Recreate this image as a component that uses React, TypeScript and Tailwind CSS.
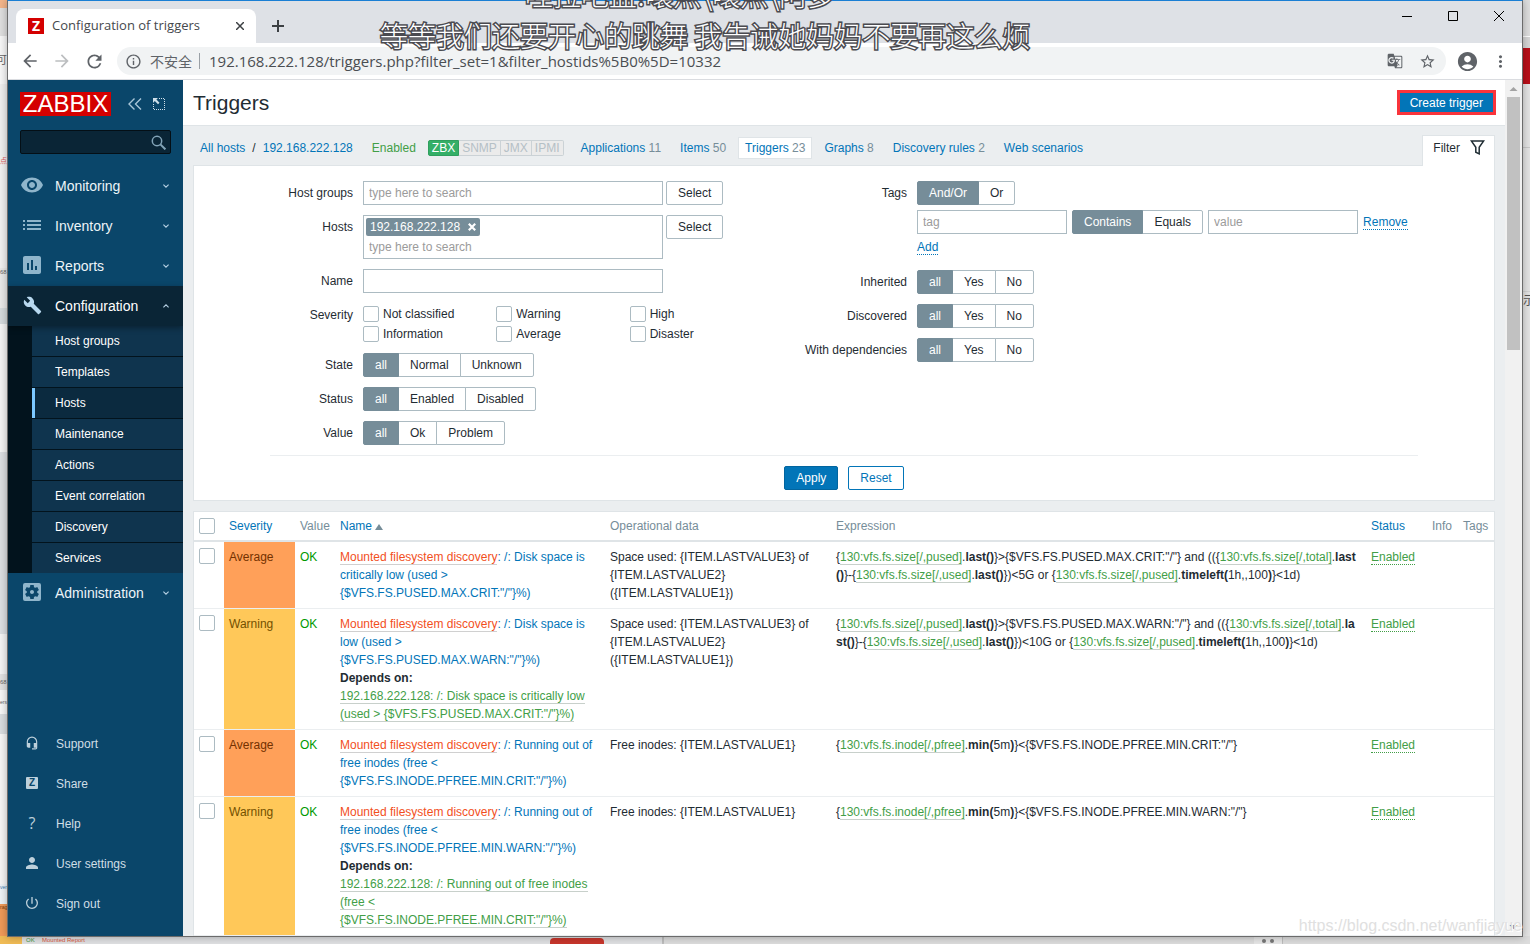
import React, { Fragment, useState } from "react";
import type { ReactNode } from "react";
import {
  MdAccountCircle,
  MdArrowBack,
  MdArrowForward,
  MdBuild,
  MdGTranslate,
  MdHeadsetMic,
  MdInfoOutline,
  MdInsertChart,
  MdList,
  MdMoreVert,
  MdPerson,
  MdPowerSettingsNew,
  MdRefresh,
  MdSettingsApplications,
  MdStarBorder,
  MdVisibility,
} from "react-icons/md";

/* ---------- Desktop behind the window ---------- */

function Backdrop() {
  return (
    <div aria-hidden="true" className="absolute inset-0 flex flex-col overflow-hidden bg-[#dfe0e2]">
      <div className="flex min-h-0 flex-1 justify-between">
        <div className="flex w-[7px] flex-col overflow-hidden whitespace-nowrap bg-[#f1f1f1] text-[6px] text-[#666]">
          <div className="h-2 bg-[#f3b58a]" />
          <div className="h-7 bg-[#dfdfdf]" />
          <div className="flex h-12 justify-end bg-[#f7f7f7] pt-4 font-['Noto_Sans_CJK_SC',sans-serif] text-[11px]">可</div>
          <div className="h-[72px] bg-[#efefef]" />
          <div className="h-28 text-[7px] text-[#e06060]">点</div>
          <div className="h-10 bg-[#e9e9e9]">68</div>
          <div className="h-4 bg-[#d5dadd]" />
          <div className="h-32 bg-[#f4f4f4]" />
          <div className="h-[182px] bg-[#dcdfe2]" />
          <div className="h-10 bg-[#f4f4f4]" />
          <div className="h-4 bg-[#e2e2e2] leading-4">68</div>
          <div className="h-6 bg-[#f7f7f7] text-[5px] leading-6">ers</div>
          <div className="h-5 bg-[#d9dde0]" />
          <div className="flex-1 bg-[#f6f6f6]" />
          <div className="h-5 bg-[#eef3f7] text-[5px] text-[#3b82b6]">ver</div>
          <div className="h-8 bg-[#f09a58] text-[5px] text-[#7a3d10]">rag</div>
        </div>
        <div className="flex w-[7px] flex-col overflow-hidden bg-[#e4e4e4]">
          <div className="h-9 bg-[#dedede]" />
          <div className="h-3 border-t border-white bg-[#d6d6d6]" />
          <div className="h-9 bg-[#b90f19]" />
          <div className="h-16 border-b border-[#c9c9c9]" />
          <div className="h-36 border-b border-[#d4d4d4]" />
          <div className="font-['Noto_Sans_CJK_SC',sans-serif] text-[12px] leading-4 text-[#555]">示</div>
        </div>
      </div>
      <div className="flex h-2 items-start overflow-hidden text-[6px] leading-2">
        <div className="h-2 w-[22px] bg-[#f0bb55]" />
        <span className="ml-1 w-3 text-[#3c963c]">OK</span>
        <span className="ml-1 w-[508px] text-[#d9573c]">Mounted Report</span>
        <div className="mt-0.5 h-2 w-[54px] rounded-t bg-[#c8362c]" />
        <div className="ml-[58px] h-2 w-0.5 bg-[#bdbdbd]" />
        <div className="flex h-2 flex-1 bg-[#dcdcdc]">
          <div className="ml-[590px] flex gap-1 border-r border-[#bdbdbd] bg-[#e6e6e6] px-2 pt-[3px]">
            <span className="size-1 rounded-full bg-[#777]" />
            <span className="size-1 rounded-full bg-[#777]" />
          </div>
        </div>
      </div>
    </div>
  );
}

/* ---------- Browser chrome ---------- */

function TabStrip() {
  return (
    <div className="flex h-[42px] shrink-0 items-end bg-[#dee1e6] pl-2">
      <div className="flex h-[34px] w-60 items-center rounded-t-lg bg-white pl-3 pr-2">
        <span className="flex size-4 items-center justify-center bg-[#d40000] font-['Open_Sans',sans-serif] text-sm font-bold leading-4 text-white">
          Z
        </span>
        <span className="ml-2 flex-1 whitespace-nowrap font-['Open_Sans',sans-serif] text-[13px] text-[#45494d]">
          Configuration of triggers
        </span>
        <button type="button" aria-label="Close tab" className="p-1">
          <svg viewBox="0 0 8 8" className="size-2" stroke="#3c4043" strokeWidth="1.5">
            <path d="M0 0l8 8M8 0l-8 8" />
          </svg>
        </button>
      </div>
      <button type="button" aria-label="New tab" className="ml-4 mb-[11px]">
        <svg viewBox="0 0 12 12" className="size-3" stroke="#3c4043" strokeWidth="2">
          <path d="M6 0v12M0 6h12" />
        </svg>
      </button>
      <div className="mb-[22px] ml-auto mr-[18px] flex items-center gap-9 text-black">
        <button type="button" aria-label="Minimize">
          <svg viewBox="0 0 10 10" className="size-2.5" stroke="currentColor">
            <path d="M0 5.5h10" />
          </svg>
        </button>
        <button type="button" aria-label="Maximize">
          <svg viewBox="0 0 10 10" className="size-2.5" stroke="currentColor" fill="none">
            <path d="M.5.5h9v9h-9z" />
          </svg>
        </button>
        <button type="button" aria-label="Close window">
          <svg viewBox="0 0 10 10" className="size-2.5" stroke="currentColor">
            <path d="M0 0l10 10M10 0L0 10" />
          </svg>
        </button>
      </div>
    </div>
  );
}

function Toolbar() {
  return (
    <div className="flex h-[37px] shrink-0 items-center border-b border-[#dadce0] bg-white pl-3 pr-3 text-[#5f6368]">
      <button type="button" aria-label="Back">
        <MdArrowBack size={20} />
      </button>
      <button type="button" aria-label="Forward" className="ml-3 text-[#bcbec0]">
        <MdArrowForward size={20} />
      </button>
      <button type="button" aria-label="Reload" className="ml-3">
        <MdRefresh size={21} />
      </button>
      <div className="ml-3 flex h-7 flex-1 items-center rounded-full bg-[#f1f3f4] pl-2 pr-2.5">
        <MdInfoOutline size={17} />
        <span className="ml-2 whitespace-nowrap font-['Noto_Sans_CJK_SC',sans-serif] text-sm leading-5">不安全</span>
        <span className="ml-[7px] h-4 w-px bg-[#9aa0a6]" />
        <input
          aria-label="Address"
          defaultValue="192.168.222.128/triggers.php?filter_set=1&filter_hostids%5B0%5D=10332"
          className="ml-[9px] min-w-0 flex-1 bg-transparent font-['Open_Sans',sans-serif] text-[15px] text-[#4a4e52] outline-none"
        />
        <button type="button" aria-label="Translate">
          <MdGTranslate size={16} />
        </button>
        <button type="button" aria-label="Bookmark" className="ml-4">
          <MdStarBorder size={17} />
        </button>
      </div>
      <button type="button" aria-label="Profile" className="ml-2.5">
        <MdAccountCircle size={23} />
      </button>
      <button type="button" aria-label="Menu" className="ml-3">
        <MdMoreVert size={19} />
      </button>
    </div>
  );
}

/* ---------- Sidebar ---------- */

function Chevron({ up = false }: { up?: boolean }) {
  return (
    <svg viewBox="0 0 6 4" className="mr-3.5 h-1 w-1.5" fill="none" stroke="#b5d0e3" strokeWidth="1.1">
      <path d={up ? "M.4 3.4L3 .8l2.6 2.6" : "M.4.6L3 3.2 5.6.6"} />
    </svg>
  );
}

function MenuItem({ icon, label, open = false }: { icon: ReactNode; label: string; open?: boolean }) {
  return (
    <a
      href="#"
      className={
        open
          ? "relative flex h-10 items-center bg-[#0a2536] pl-3 text-sm text-white shadow-[0_2px_6px_rgba(0,0,0,0.35)]"
          : "flex h-10 items-center pl-3 text-sm text-[#edf4f8]"
      }
    >
      <span
        className={
          open ? "flex w-6 justify-center pb-0.5 text-[#b8d8ef]" : "flex w-6 justify-center pb-0.5 text-[#8fb5cb]"
        }
      >
        {icon}
      </span>
      <span className="ml-[11px] flex-1">{label}</span>
      <Chevron up={open} />
    </a>
  );
}

const SUBMENU = [
  "Host groups",
  "Templates",
  "Hosts",
  "Maintenance",
  "Actions",
  "Event correlation",
  "Discovery",
  "Services",
];

const FOOT_MENU: { label: string; icon: ReactNode }[] = [
  { label: "Support", icon: <MdHeadsetMic size={14} /> },
  {
    label: "Share",
    icon: (
      <span className="flex size-3 items-center justify-center rounded-[1px] bg-[#bdd0db] text-[10px] font-bold leading-3 text-[#0a466a]">
        Z
      </span>
    ),
  },
  { label: "Help", icon: <span className="font-['Open_Sans',sans-serif] text-base leading-4">?</span> },
  { label: "User settings", icon: <MdPerson size={18} /> },
  { label: "Sign out", icon: <MdPowerSettingsNew size={16} /> },
];

function Sidebar() {
  return (
    <aside className="flex w-[175px] shrink-0 flex-col overflow-hidden bg-[#0a466a]">
      <div className="flex items-center pl-3 pt-3">
        <a
          href="#"
          className="flex h-6 w-[91px] items-center justify-center bg-[#d40000] text-2xl leading-6 text-white"
        >
          ZABBIX
        </a>
        <button type="button" aria-label="Collapse sidebar" className="ml-[17px]">
          <svg viewBox="0 0 14 12" className="h-3 w-3.5" fill="none" stroke="#a9c6d8" strokeWidth="1.4">
            <path d="M6.5.5L1 6l5.5 5.5M13 .5L7.5 6l5.5 5.5" />
          </svg>
        </button>
        <button type="button" aria-label="Hide sidebar" className="ml-[11px]">
          <svg viewBox="0 0 12 12" className="size-3" fill="none" stroke="#cfe0ea">
            <path d="M6 .5h6M11.5 1v11M.5 6v6M1 11.5h11" strokeDasharray="1 1" />
            <path d="M0 0h5L3.4 1.6 6.5 4.7 5 6.2 1.8 3 0 5z" fill="#cfe0ea" stroke="none" />
          </svg>
        </button>
      </div>
      <label className="mx-3 mt-3.5 flex h-6 items-center rounded-xs border border-[#040f16] bg-[#0a2536] pr-1">
        <input aria-label="Search" className="min-w-0 flex-1 bg-transparent px-1 text-xs text-white outline-none" />
        <svg viewBox="0 0 15 15" className="size-[15px]" fill="none" stroke="#83a4b8">
          <circle cx="6" cy="6" r="4.7" strokeWidth="1.5" />
          <path d="M9.4 9.4l5 5" strokeWidth="2" />
        </svg>
      </label>
      <nav className="mt-3">
        <MenuItem icon={<MdVisibility size={24} />} label="Monitoring" />
        <MenuItem icon={<MdList size={24} />} label="Inventory" />
        <MenuItem icon={<MdInsertChart size={24} />} label="Reports" />
        <MenuItem icon={<MdBuild size={19} />} label="Configuration" open />
        <ul className="divide-y divide-[#02131d] bg-[#02131d] pl-6 text-xs text-white">
          {SUBMENU.map((item) => (
            <li key={item}>
              <a
                href="#"
                className={
                  item === "Hosts"
                    ? "flex h-[30px] items-center border-l-3 border-[#7cc8ff] bg-[#0b2a3f] pl-5"
                    : "flex h-[30px] items-center bg-[#0f344e] pl-[23px]"
                }
              >
                {item}
              </a>
            </li>
          ))}
        </ul>
        <MenuItem icon={<MdSettingsApplications size={24} />} label="Administration" />
      </nav>
      <nav className="mt-auto pb-3">
        {FOOT_MENU.map(({ label, icon }) => (
          <a key={label} href="#" className="flex h-10 items-center pl-3 text-xs text-[#d0dee6]">
            <span className="flex w-6 justify-center pb-0.5 text-[#bdd0db]">{icon}</span>
            <span className="ml-3">{label}</span>
          </a>
        ))}
      </nav>
    </aside>
  );
}

/* ---------- Filter ---------- */

const BOX = "h-6 border border-[#acbbc2] bg-white px-[5px] outline-none placeholder:text-[#9b9b9b]";
const CHECK = "size-4 shrink-0 appearance-none rounded-xs border border-[#acbbc2] bg-white checked:bg-[#0275b8]";

function Segmented({ name, options, label }: { name: string; options: string[]; label: string }) {
  const [value, setValue] = useState(options[0]);
  return (
    <div role="radiogroup" aria-label={label} className="relative flex">
      {options.map((option) => (
        <label
          key={option}
          className={
            option === value
              ? "z-10 flex h-6 items-center border border-[#768d99] bg-[#768d99] px-[11px] text-white not-first:-ml-px first:rounded-l-xs last:rounded-r-xs"
              : "flex h-6 items-center border border-[#acbbc2] bg-white px-[11px] not-first:-ml-px first:rounded-l-xs last:rounded-r-xs"
          }
        >
          <input
            type="radio"
            name={name}
            checked={option === value}
            onChange={() => setValue(option)}
            className="sr-only"
          />
          {option}
        </label>
      ))}
    </div>
  );
}

function LeftRow({ label, htmlFor, children }: { label: string; htmlFor?: string; children: ReactNode }) {
  return (
    <div className="flex items-start gap-2.5">
      <label htmlFor={htmlFor} className="w-[83px] shrink-0 text-right leading-6">
        {label}
      </label>
      {children}
    </div>
  );
}

function RightRow({ label, children }: { label: string; children: ReactNode }) {
  return (
    <div className="flex items-start gap-2.5">
      <span className="w-[102px] shrink-0 whitespace-nowrap text-right leading-6">{label}</span>
      {children}
    </div>
  );
}

function SelectButton() {
  return (
    <button type="button" className="-ml-[7px] h-6 rounded-xs border border-[#acbbc2] bg-white px-[11px]">
      Select
    </button>
  );
}

function Filter() {
  return (
    <form className="border border-[#dfe4e7] bg-white pb-2.5 pt-[15px]" onSubmit={(e) => e.preventDefault()}>
      <div className="mx-auto w-full max-w-[1148px]">
        <div className="flex gap-[42px] border-b border-[#ebeef0] pb-2.5">
          <div className="flex w-[493px] flex-col gap-2.5">
            <LeftRow label="Host groups" htmlFor="groups">
              <input id="groups" placeholder="type here to search" className={BOX + " w-[300px]"} />
              <SelectButton />
            </LeftRow>
            <LeftRow label="Hosts" htmlFor="hosts">
              <div className="flex h-11 w-[300px] flex-col items-start border border-[#acbbc2] px-0.5 pt-0.5">
                <span className="flex h-[18px] shrink-0 items-center rounded-xs bg-[#768d99] px-1 text-white">
                  192.168.222.128
                  <button type="button" aria-label="Remove host" className="ml-2">
                    <svg viewBox="0 0 8 8" className="size-2" stroke="#fff" strokeWidth="2.2">
                      <path d="M.8.8l6.4 6.4M7.2.8L.8 7.2" />
                    </svg>
                  </button>
                </span>
                <input
                  id="hosts"
                  placeholder="type here to search"
                  className="h-[22px] w-full shrink-0 px-[3px] outline-none placeholder:text-[#9b9b9b]"
                />
              </div>
              <SelectButton />
            </LeftRow>
            <LeftRow label="Name" htmlFor="name">
              <input id="name" className={BOX + " w-[300px]"} />
            </LeftRow>
            <LeftRow label="Severity">
              <div className="grid w-[400px] grid-cols-3 gap-y-1 pb-px pt-[3px]">
                {["Not classified", "Warning", "High", "Information", "Average", "Disaster"].map((item) => (
                  <label key={item} className="flex h-4 items-center gap-1">
                    <input type="checkbox" className={CHECK} />
                    {item}
                  </label>
                ))}
              </div>
            </LeftRow>
            <LeftRow label="State">
              <Segmented name="state" label="State" options={["all", "Normal", "Unknown"]} />
            </LeftRow>
            <LeftRow label="Status">
              <Segmented name="status" label="Status" options={["all", "Enabled", "Disabled"]} />
            </LeftRow>
            <LeftRow label="Value">
              <Segmented name="value" label="Value" options={["all", "Ok", "Problem"]} />
            </LeftRow>
          </div>
          <div className="flex flex-col gap-2.5">
            <RightRow label="Tags">
              <div className="flex flex-col items-start gap-[5px]">
                <Segmented name="evaltype" label="Tags" options={["And/Or", "Or"]} />
                <div className="flex items-center gap-[5px]">
                  <input aria-label="Tag" placeholder="tag" className={BOX + " w-[150px]"} />
                  <Segmented name="operator" label="Operator" options={["Contains", "Equals"]} />
                  <input aria-label="Tag value" placeholder="value" className={BOX + " w-[150px]"} />
                  <button type="button" className="border-b border-dotted border-[#0275b8] leading-[14px] text-[#0275b8]">
                    Remove
                  </button>
                </div>
                <button
                  type="button"
                  className="mb-[5px] mt-px border-b border-dotted border-[#0275b8] leading-[14px] text-[#0275b8]"
                >
                  Add
                </button>
              </div>
            </RightRow>
            <RightRow label="Inherited">
              <Segmented name="inherited" label="Inherited" options={["all", "Yes", "No"]} />
            </RightRow>
            <RightRow label="Discovered">
              <Segmented name="discovered" label="Discovered" options={["all", "Yes", "No"]} />
            </RightRow>
            <RightRow label="With dependencies">
              <Segmented name="dependent" label="With dependencies" options={["all", "Yes", "No"]} />
            </RightRow>
          </div>
        </div>
        <div className="flex justify-center gap-2.5 pt-2.5">
          <button type="submit" className="h-6 rounded-xs border border-[#02659f] bg-[#0275b8] px-[11px] text-white">
            Apply
          </button>
          <button type="reset" className="h-6 rounded-xs border border-[#0275b8] bg-white px-[11px] text-[#0275b8]">
            Reset
          </button>
        </div>
      </div>
    </form>
  );
}

/* ---------- Navigation over the filter ---------- */

function HostNav() {
  const links: [string, string][] = [
    ["Applications", "11"],
    ["Items", "50"],
    ["Triggers", "23"],
    ["Graphs", "8"],
    ["Discovery rules", "2"],
    ["Web scenarios", ""],
  ];
  return (
    <div className="flex h-[39px] items-end justify-between">
      <nav className="flex items-center whitespace-nowrap pb-1.5 pl-[7px] text-[#0275b8]">
        <a href="#">All hosts</a>
        <span className="mx-[7px] text-[#1f2c33]">/</span>
        <a href="#">192.168.222.128</a>
        <span className="ml-[19px] text-[#429e47]">Enabled</span>
        <span className="ml-3 mr-2.5 flex h-4 text-xs leading-[14px] text-[#b5c0c6]">
          <span className="rounded-l-xs border border-[#2f9f5e] bg-[#34af67] px-[3px] text-white">ZBX</span>
          <span className="border border-l-0 border-[#cbd2d6] bg-[#ebebeb] px-[3px]">SNMP</span>
          <span className="border border-l-0 border-[#cbd2d6] bg-[#ebebeb] px-[3px]">JMX</span>
          <span className="rounded-r-xs border border-l-0 border-[#cbd2d6] bg-[#ebebeb] px-[3px]">IPMI</span>
        </span>
        <span className="flex gap-[5px]">
          {links.map(([label, count]) => (
            <a
              key={label}
              href="#"
              className={
                label === "Triggers"
                  ? "block border border-[#dfe4e7] bg-white px-1.5 leading-5"
                  : "block border border-transparent px-1.5 leading-5"
              }
            >
              {label}
              {count && <span className="text-[#768d99]"> {count}</span>}
            </a>
          ))}
        </span>
      </nav>
      <button
        type="button"
        className="relative -mb-px flex h-[31px] items-center gap-2.5 border border-b-0 border-[#dfe4e7] bg-white pb-1.5 pl-2.5 pr-[9px]"
      >
        Filter
        <svg viewBox="0 0 15 16" className="h-4 w-[15px]" fill="none" stroke="#1f2c33" strokeWidth="1.5">
          <path d="M1.3.9h12.4L9.2 7.2v6.7l-3.4-1.7v-5z" />
        </svg>
      </button>
    </div>
  );
}

/* ---------- Trigger table ---------- */

interface Trigger {
  severity: "Average" | "Warning";
  name: string;
  dependsOn?: string;
  data: string;
  /* parts are split by "|"; "@" starts an item link, "*" a bold part */
  expression: string;
}

const TRIGGERS: Trigger[] = [
  {
    severity: "Average",
    name: 'Disk space is critically low (used > {$VFS.FS.PUSED.MAX.CRIT:"/"}%)',
    data: "Space used: {ITEM.LASTVALUE3} of {ITEM.LASTVALUE2} ({ITEM.LASTVALUE1})",
    expression:
      '{|@130:vfs.fs.size[/,pused]|.|*last()|}>{$VFS.FS.PUSED.MAX.CRIT:"/"} and (({|@130:vfs.fs.size[/,total]|.|*last()|}-{|@130:vfs.fs.size[/,used]|.|*last()|})<5G or {|@130:vfs.fs.size[/,pused]|.|*timeleft(|1h,,100|*)|}<1d)',
  },
  {
    severity: "Warning",
    name: 'Disk space is low (used > {$VFS.FS.PUSED.MAX.WARN:"/"}%)',
    dependsOn: '192.168.222.128: /: Disk space is critically low (used > {$VFS.FS.PUSED.MAX.CRIT:"/"}%)',
    data: "Space used: {ITEM.LASTVALUE3} of {ITEM.LASTVALUE2} ({ITEM.LASTVALUE1})",
    expression:
      '{|@130:vfs.fs.size[/,pused]|.|*last()|}>{$VFS.FS.PUSED.MAX.WARN:"/"} and (({|@130:vfs.fs.size[/,total]|.|*last()|}-{|@130:vfs.fs.size[/,used]|.|*last()|})<10G or {|@130:vfs.fs.size[/,pused]|.|*timeleft(|1h,,100|*)|}<1d)',
  },
  {
    severity: "Average",
    name: 'Running out of free inodes (free < {$VFS.FS.INODE.PFREE.MIN.CRIT:"/"}%)',
    data: "Free inodes: {ITEM.LASTVALUE1}",
    expression: '{|@130:vfs.fs.inode[/,pfree]|.|*min(|5m|*)|}<{$VFS.FS.INODE.PFREE.MIN.CRIT:"/"}',
  },
  {
    severity: "Warning",
    name: 'Running out of free inodes (free < {$VFS.FS.INODE.PFREE.MIN.WARN:"/"}%)',
    dependsOn: '192.168.222.128: /: Running out of free inodes (free < {$VFS.FS.INODE.PFREE.MIN.CRIT:"/"}%)',
    data: "Free inodes: {ITEM.LASTVALUE1}",
    expression: '{|@130:vfs.fs.inode[/,pfree]|.|*min(|5m|*)|}<{$VFS.FS.INODE.PFREE.MIN.WARN:"/"}',
  },
];

function Expression({ source }: { source: string }) {
  return (
    <>
      {source.split("|").map((part, i) => {
        if (part.startsWith("@")) {
          return (
            <a key={i} href="#" className="border-b border-[#c8d0cb] text-[#429e47]">
              {part.slice(1)}
            </a>
          );
        }
        if (part.startsWith("*")) return <b key={i}>{part.slice(1)}</b>;
        return <Fragment key={i}>{part}</Fragment>;
      })}
    </>
  );
}

function TriggerTable() {
  const cell = "px-[5px] py-1.5 align-top";
  const head = "px-[5px] font-normal text-[#768d99]";
  return (
    <table className="mt-2.5 w-full table-fixed border-separate border-spacing-0 border border-[#dfe4e7] bg-white text-left leading-[18px]">
      <colgroup>
        <col className="w-[30px]" />
        <col className="w-[71px]" />
        <col className="w-10" />
        <col className="w-[270px]" />
        <col className="w-[226px]" />
        <col />
        <col className="w-[61px]" />
        <col className="w-[31px]" />
        <col className="w-9" />
      </colgroup>
      <thead>
        <tr className="h-[30px] *:border-b-2 *:border-[#dfe4e7]">
          <th className="px-[5px]">
            <input type="checkbox" aria-label="Select all" className={CHECK + " block"} />
          </th>
          <th className={head}>
            <a href="#" className="text-[#0275b8]">Severity</a>
          </th>
          <th className={head}>Value</th>
          <th className={head}>
            <a href="#" className="flex items-center gap-[3px] text-[#0275b8]">
              Name
              <svg viewBox="0 0 8 6" className="mt-0.5 h-1.5 w-2" fill="#768d99">
                <path d="M4 0l4 6H0z" />
              </svg>
            </a>
          </th>
          <th className={head}>Operational data</th>
          <th className={head}>Expression</th>
          <th className={head}>
            <a href="#" className="text-[#0275b8]">Status</a>
          </th>
          <th className={head}>Info</th>
          <th className={head}>Tags</th>
        </tr>
      </thead>
      <tbody>
        {TRIGGERS.map((t) => (
          <tr key={t.name} className="*:border-b *:border-[#ebeef0]">
            <td className={cell}>
              <input type="checkbox" aria-label={t.name} className={CHECK + " block"} />
            </td>
            <td
              className={
                t.severity === "Average"
                  ? cell + " bg-[#ffa059] text-[#733100]"
                  : cell + " bg-[#ffc859] text-[#735000]"
              }
            >
              {t.severity}
            </td>
            <td className={cell + " text-[#009900]"}>OK</td>
            <td className={cell + " text-[#0275b8]"}>
              <a href="#" className="border-b border-[#d0d0d0] text-[#f24f1d]">
                Mounted filesystem discovery
              </a>
              {": "}
              <a href="#">/: {t.name}</a>
              {t.dependsOn && (
                <>
                  <b className="block text-[#1f2c33]">Depends on:</b>
                  <a href="#" className="border-b border-[#c8d0cb] text-[#429e47]">
                    {t.dependsOn}
                  </a>
                </>
              )}
            </td>
            <td className={cell}>{t.data}</td>
            <td className={cell + " break-all"}>
              <Expression source={t.expression} />
            </td>
            <td className={cell}>
              <a href="#" className="border-b border-dotted border-[#429e47] text-[#429e47]">Enabled</a>
            </td>
            <td className={cell} />
            <td className={cell} />
          </tr>
        ))}
      </tbody>
    </table>
  );
}

/* ---------- Page ---------- */

function ScrollBar() {
  return (
    <div aria-hidden="true" className="flex w-[17px] shrink-0 flex-col items-center bg-[#f1f1f1]">
      <svg viewBox="0 0 17 17" className="size-[17px] shrink-0" fill="#a3a3a3">
        <path d="M8.5 7l4 4h-8z" />
      </svg>
      <div className="h-[253px] w-[13px] bg-[#c1c1c1]" />
      <svg viewBox="0 0 17 17" className="mt-auto size-[17px] shrink-0" fill="#505050">
        <path d="M8.5 10l4-4h-8z" />
      </svg>
    </div>
  );
}

const OUTLINED =
  "absolute whitespace-nowrap font-['Noto_Sans_CJK_SC',sans-serif] text-[28px] font-light leading-8 text-white [-webkit-text-stroke:3px_#4a4a50] [paint-order:stroke_fill]";

export default function App() {
  return (
    <div className="relative flex h-screen flex-col overflow-hidden px-[7px] pb-[7px] font-['Liberation_Sans','Noto_Sans_CJK_SC',sans-serif] text-xs text-[#1f2c33]">
      <Backdrop />
      <div className="relative flex min-h-0 flex-1 flex-col overflow-hidden border border-[#6b6b6b] border-t-[#1a7fd4] bg-white shadow-[0_0_8px_rgba(0,0,0,0.3)]">
        <TabStrip />
        <Toolbar />
        <div className="flex min-h-0 flex-1">
          <Sidebar />
          <main className="min-w-0 flex-1 overflow-hidden bg-[#ebeef0]">
            <header className="flex h-[46px] items-center justify-between border-b border-[#dfe4e7] bg-white pl-2.5 pr-[9px]">
              <h1 className="text-[21px]">Triggers</h1>
              <button type="button" className="h-[25px] border-3 border-[#f9343b] bg-[#0275b8] px-2.5 text-white">
                Create trigger
              </button>
            </header>
            <div className="px-2.5">
              <HostNav />
              <Filter />
              <TriggerTable />
            </div>
          </main>
          <ScrollBar />
        </div>
      </div>
      <div className="pointer-events-none absolute inset-0 overflow-hidden">
        <p className={OUTLINED + " -top-[22px] left-[525px]"}>哇拉吧盟!嚷点\嚷点\阿多</p>
        <p className={OUTLINED + " left-[380px] top-[19px]"}>等等我们还要开心的跳舞 我告诫她妈妈不要再这么烦</p>
        <p className="absolute bottom-2 right-2 text-base leading-5 text-[#e0e0e0] [text-shadow:1px_1px_#ffffff]">
          https://blog.csdn.net/wanfjiayue
        </p>
      </div>
    </div>
  );
}
